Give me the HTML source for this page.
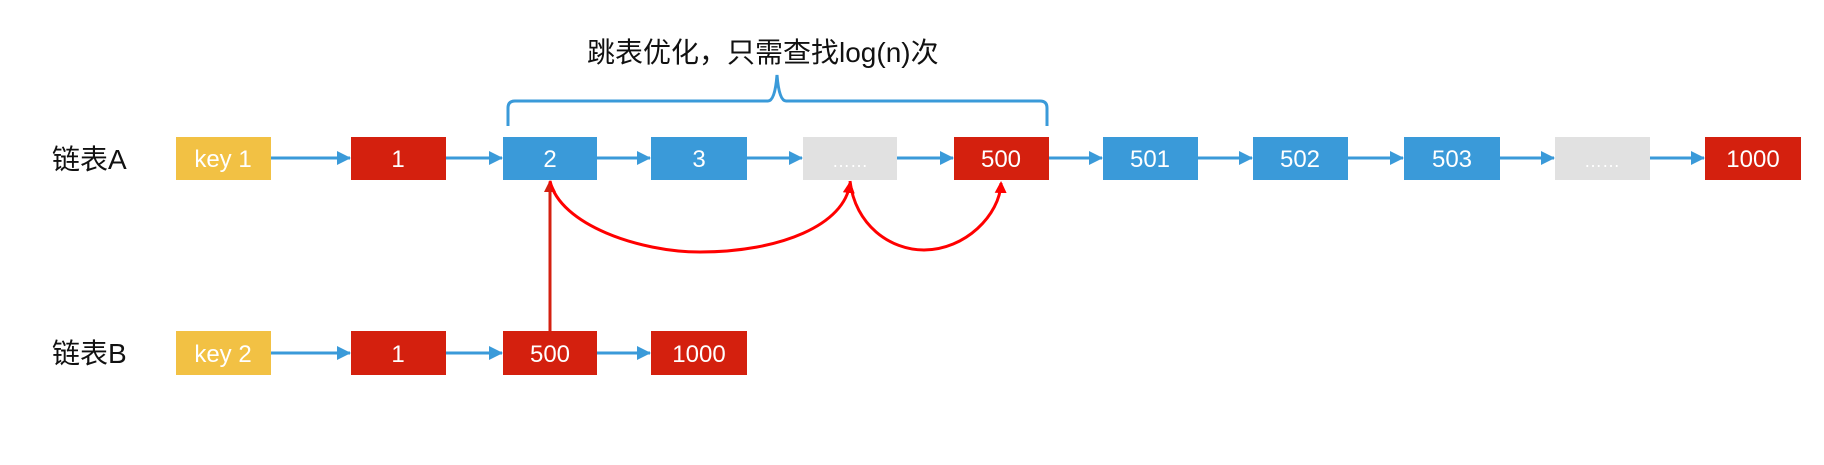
<!DOCTYPE html>
<html><head><meta charset="utf-8"><style>
html,body{margin:0;padding:0;background:#fff;width:1824px;height:465px;overflow:hidden}
svg{display:block}
text{font-family:"Liberation Sans","Noto Sans CJK SC",sans-serif}
</style></head><body>
<svg width="1824" height="465" viewBox="0 0 1824 465" xmlns="http://www.w3.org/2000/svg">
<defs>
<marker id="ab" markerWidth="14" markerHeight="14" refX="13" refY="7" orient="auto" markerUnits="userSpaceOnUse"><path d="M0,0 L14,7 L0,14 Z" fill="#3a9ad9"/></marker>
<marker id="ar" markerWidth="12" markerHeight="12" refX="10" refY="6" orient="auto" markerUnits="userSpaceOnUse"><path d="M0,0 L12,6 L0,12 Z" fill="#ff0000"/></marker>
<marker id="ad" markerWidth="12" markerHeight="12" refX="10" refY="6" orient="auto" markerUnits="userSpaceOnUse"><path d="M0,0 L12,6 L0,12 Z" fill="#d42010"/></marker>
</defs>
<text x="587" y="62" font-size="28" fill="#111">跳表优化，只需查找log(n)次</text>
<path d="M508,126 L508,108 Q508,101 515,101 L768,101 Q775,101 777,75 Q779,101 786,101 L1040,101 Q1047,101 1047,108 L1047,126" fill="none" stroke="#3a9ad9" stroke-width="3"/>
<text x="52" y="169" font-size="28" fill="#111">链表A</text>
<text x="52" y="363" font-size="28" fill="#111">链表B</text>
<g font-size="24" fill="#fff" text-anchor="middle">
<rect x="176" y="137" width="95" height="43" fill="#f2c144"/><text x="223" y="167">key 1</text>
<rect x="351" y="137" width="95" height="43" fill="#d4200e"/><text x="398" y="167">1</text>
<rect x="503" y="137" width="94" height="43" fill="#3a9ad9"/><text x="550" y="167">2</text>
<rect x="651" y="137" width="96" height="43" fill="#3a9ad9"/><text x="699" y="167">3</text>
<rect x="803" y="137" width="94" height="43" fill="#e1e1e1"/><text x="850" y="167" font-size="18">……</text>
<rect x="954" y="137" width="95" height="43" fill="#d4200e"/><text x="1001" y="167">500</text>
<rect x="1103" y="137" width="95" height="43" fill="#3a9ad9"/><text x="1150" y="167">501</text>
<rect x="1253" y="137" width="95" height="43" fill="#3a9ad9"/><text x="1300" y="167">502</text>
<rect x="1404" y="137" width="96" height="43" fill="#3a9ad9"/><text x="1452" y="167">503</text>
<rect x="1555" y="137" width="95" height="43" fill="#e1e1e1"/><text x="1602" y="167" font-size="18">……</text>
<rect x="1705" y="137" width="96" height="43" fill="#d4200e"/><text x="1753" y="167">1000</text>
<rect x="176" y="331" width="95" height="44" fill="#f2c144"/><text x="223" y="362">key 2</text>
<rect x="351" y="331" width="95" height="44" fill="#d4200e"/><text x="398" y="362">1</text>
<rect x="503" y="331" width="94" height="44" fill="#d4200e"/><text x="550" y="362">500</text>
<rect x="651" y="331" width="96" height="44" fill="#d4200e"/><text x="699" y="362">1000</text>
</g>
<g stroke="#3a9ad9" stroke-width="3" marker-end="url(#ab)">
<line x1="271" y1="158" x2="350" y2="158"/>
<line x1="446" y1="158" x2="502" y2="158"/>
<line x1="597" y1="158" x2="650" y2="158"/>
<line x1="747" y1="158" x2="802" y2="158"/>
<line x1="897" y1="158" x2="953" y2="158"/>
<line x1="1049" y1="158" x2="1102" y2="158"/>
<line x1="1198" y1="158" x2="1252" y2="158"/>
<line x1="1348" y1="158" x2="1403" y2="158"/>
<line x1="1500" y1="158" x2="1554" y2="158"/>
<line x1="1650" y1="158" x2="1704" y2="158"/>
<line x1="271" y1="353" x2="350" y2="353"/>
<line x1="446" y1="353" x2="502" y2="353"/>
<line x1="597" y1="353" x2="650" y2="353"/>
</g>
<line x1="550" y1="331" x2="550" y2="182" stroke="#d42010" stroke-width="3" marker-end="url(#ad)"/>
<path d="M550,181 C560,225 640,252 700,252 C780,252 845,225 850,183" fill="none" stroke="#ff0000" stroke-width="3" marker-end="url(#ar)"/>
<path d="M850,181 C855,225 890,250 924,250 C965,250 1000,215 1001,183" fill="none" stroke="#ff0000" stroke-width="3" marker-end="url(#ar)"/>
</svg>
</body></html>
